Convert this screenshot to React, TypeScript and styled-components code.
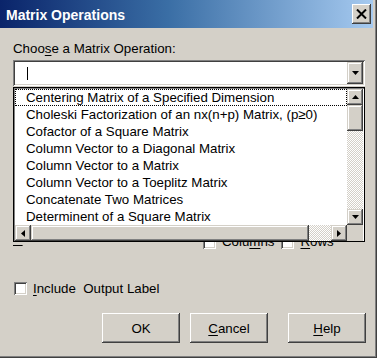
import { FC } from "react";
import styled, { createGlobalStyle } from "styled-components";

// classic 3D palette
const FACE = "#d4d0c8";
const SHADOW = "#808080";
const DARK = "#404040";

const GlobalStyle = createGlobalStyle`
  html, body {
    margin: 0;
    padding: 0;
    background: ${FACE};
  }
  body {
    font-family: "Liberation Sans", Arial, sans-serif;
    font-size: 13.3px;
    color: #000;
  }
`;

const Window = styled.div`
  width: 377px;
  height: 358px;
  box-sizing: border-box;
  padding: 0 4px 4px 0;
  background: ${FACE};
  box-shadow: inset -1px -1px ${DARK}, inset -2px -2px ${SHADOW};
  display: flex;
  flex-direction: column;
  overflow: hidden;
`;

const TitleBar = styled.div`
  height: 28px;
  flex: none;
  display: flex;
  align-items: center;
  justify-content: space-between;
  padding: 0 2px 0 6px;
  background: linear-gradient(to right, #0a246a 0%, #3a6ea5 45%, #a6caf0 100%);
`;

const TitleText = styled.div`
  color: #fff;
  font-weight: 700;
  font-size: 14px;
  line-height: 16px;
  padding-top: 2px;
`;

const CloseButton = styled.div`
  width: 19px;
  height: 20px;
  box-sizing: border-box;
  background: ${FACE};
  box-shadow: inset -1px -1px ${DARK}, inset 1px 1px #fff,
    inset -2px -2px ${SHADOW}, inset 2px 2px ${FACE};
  display: flex;
  align-items: center;
  justify-content: center;
`;

const Content = styled.div`
  flex: 1;
  display: flex;
  flex-direction: column;
  padding: 13px 7px 0 13px;
`;

const Label = styled.div`
  line-height: 16px;
  height: 16px;
  white-space: nowrap;
`;

const Key = styled.span<{ $offset?: number }>`
  text-decoration: underline;
  text-underline-offset: ${(p) => p.$offset ?? 2}px;
`;

const ComboArea = styled.div`
  position: relative;
  margin-top: 3px;
  width: 352px;
`;

const Combo = styled.div`
  height: 26px;
  box-sizing: border-box;
  padding: 2px;
  background: #fff;
  box-shadow: inset 1px 1px ${SHADOW}, inset -1px -1px #fff,
    inset 2px 2px ${DARK}, inset -2px -2px ${FACE};
  display: flex;
  align-items: center;
`;

const Caret = styled.div`
  width: 1px;
  height: 13px;
  margin-left: 12px;
  background: #000;
`;

const RaisedButton = styled.div<{ $w: number; $h: number }>`
  width: ${(p) => p.$w}px;
  height: ${(p) => p.$h}px;
  flex: none;
  box-sizing: border-box;
  background: ${FACE};
  box-shadow: inset -1px -1px ${DARK}, inset 1px 1px ${FACE},
    inset -2px -2px ${SHADOW}, inset 2px 2px #fff;
  display: flex;
  align-items: center;
  justify-content: center;
`;

const ComboButton = styled(RaisedButton)`
  margin-left: auto;
  align-self: stretch;
  height: auto;
`;

// the open drop-down list lies over the options row below
const DropList = styled.div`
  position: absolute;
  top: 27px;
  left: 0;
  width: 352px;
  height: 155px;
  box-sizing: border-box;
  border: 1px solid #000;
  padding: 1px 0 0 1px;
  background: #fff;
  box-shadow: inset 1px 1px ${SHADOW};
  display: grid;
  grid-template-columns: 332px 16px;
  grid-template-rows: 136px 16px;
  z-index: 2;
`;

const Items = styled.div`
  overflow: hidden;
  background: #fff;
`;

const Item = styled.div<{ $focused?: boolean }>`
  height: 17px;
  line-height: 15px;
  box-sizing: border-box;
  padding-left: 10px;
  white-space: nowrap;
  border: 1px ${(p) => (p.$focused ? "dotted #000" : "solid transparent")};
`;

const VScroll = styled.div`
  display: flex;
  flex-direction: column;
`;

const HScroll = styled.div`
  display: flex;
`;

const Track = styled.div`
  flex: 1;
  background: repeating-conic-gradient(${FACE} 0 25%, #fff 0 50%) 0 0 / 2px 2px;
`;

const Corner = styled.div`
  background: ${FACE};
`;

const OptionsRow = styled.div`
  margin-top: 148px;
  height: 16px;
  display: flex;
  align-items: center;
`;

const HiddenLabel = styled.div`
  width: 190px;
  line-height: 16px;
  margin-top: -14px;
  white-space: nowrap;
`;

const CheckGroup = styled.label<{ $gap?: number }>`
  display: flex;
  align-items: center;
  gap: 6px;
  margin-left: ${(p) => p.$gap ?? 0}px;
  line-height: 16px;
  white-space: nowrap;
`;

const CheckBox = styled.span`
  width: 13px;
  height: 13px;
  flex: none;
  box-sizing: border-box;
  background: #fff;
  box-shadow: inset 1px 1px ${SHADOW}, inset -1px -1px #fff,
    inset 2px 2px ${DARK}, inset -2px -2px ${FACE};
`;

const IncludeRow = styled(CheckGroup)`
  margin-top: 31px;
  padding-left: 1px;
  height: 15px;
`;

const ButtonRow = styled.div`
  margin-top: 17px;
  display: flex;
  justify-content: flex-end;
`;

const PushButton = styled.div<{ $gap: number }>`
  width: 78px;
  height: 30px;
  margin-left: ${(p) => p.$gap}px;
  box-sizing: border-box;
  background: ${FACE};
  box-shadow: inset -1px -1px ${DARK}, inset 1px 1px #fff,
    inset -2px -2px ${SHADOW}, inset 2px 2px ${FACE};
  display: flex;
  align-items: center;
  justify-content: center;
`;

type Dir = "up" | "down" | "left" | "right";

const ARROWS: Record<Dir, string> = {
  up: "3.5,0 7,4 0,4",
  down: "0,0 7,0 3.5,4",
  left: "4,0 4,7 0,3.5",
  right: "0,0 4,3.5 0,7",
};

const Arrow: FC<{ dir: Dir }> = ({ dir }) => {
  const vertical = dir === "up" || dir === "down";
  const w = vertical ? 7 : 4;
  const h = vertical ? 4 : 7;
  return (
    <svg width={w} height={h} viewBox={`0 0 ${w} ${h}`}>
      <polygon points={ARROWS[dir]} fill="#000" />
    </svg>
  );
};

const operations = [
  "Centering Matrix of a Specified Dimension",
  "Choleski Factorization of an nx(n+p) Matrix, (p≥0)",
  "Cofactor of a Square Matrix",
  "Column Vector to a Diagonal Matrix",
  "Column Vector to a Matrix",
  "Column Vector to a Toeplitz Matrix",
  "Concatenate Two Matrices",
  "Determinent of a Square Matrix",
];

const App: FC = () => {
  return (
    <Window>
      <GlobalStyle />
      <TitleBar>
        <TitleText>Matrix Operations</TitleText>
        <CloseButton>
          <svg width="11" height="10" viewBox="0 0 11 10">
            <path d="M1 0.5 L10 9.5 M10 0.5 L1 9.5" stroke="#000" strokeWidth="2" />
          </svg>
        </CloseButton>
      </TitleBar>
      <Content>
        <Label>
          Choo<Key>s</Key>e a Matrix Operation:
        </Label>
        <ComboArea>
          <Combo>
            <Caret />
            <ComboButton $w={16} $h={22}>
              <Arrow dir="down" />
            </ComboButton>
          </Combo>
          <DropList>
            <Items>
              {operations.map((op, i) => (
                <Item key={op} $focused={i === 0}>
                  {op}
                </Item>
              ))}
            </Items>
            <VScroll>
              <RaisedButton $w={16} $h={16}>
                <Arrow dir="up" />
              </RaisedButton>
              <RaisedButton $w={16} $h={26} />
              <Track />
              <RaisedButton $w={16} $h={16}>
                <Arrow dir="down" />
              </RaisedButton>
            </VScroll>
            <HScroll>
              <RaisedButton $w={16} $h={16}>
                <Arrow dir="left" />
              </RaisedButton>
              <RaisedButton $w={278} $h={16} />
              <Track />
              <RaisedButton $w={16} $h={16}>
                <Arrow dir="right" />
              </RaisedButton>
            </HScroll>
            <Corner />
          </DropList>
        </ComboArea>
        <OptionsRow>
          <HiddenLabel>
            <Key $offset={6}>D</Key>imension
          </HiddenLabel>
          <CheckGroup>
            <CheckBox />
            <span>
              Colu<Key>m</Key>ns
            </span>
          </CheckGroup>
          <CheckGroup $gap={7}>
            <CheckBox />
            <span>
              <Key>R</Key>ows
            </span>
          </CheckGroup>
        </OptionsRow>
        <IncludeRow>
          <CheckBox />
          <span>
            <Key>I</Key>nclude&nbsp; Output Label
          </span>
        </IncludeRow>
        <ButtonRow>
          <PushButton $gap={0}>OK</PushButton>
          <PushButton $gap={10}>
            <Key>C</Key>ancel
          </PushButton>
          <PushButton $gap={20}>
            <Key>H</Key>elp
          </PushButton>
        </ButtonRow>
      </Content>
    </Window>
  );
};

export default App;
